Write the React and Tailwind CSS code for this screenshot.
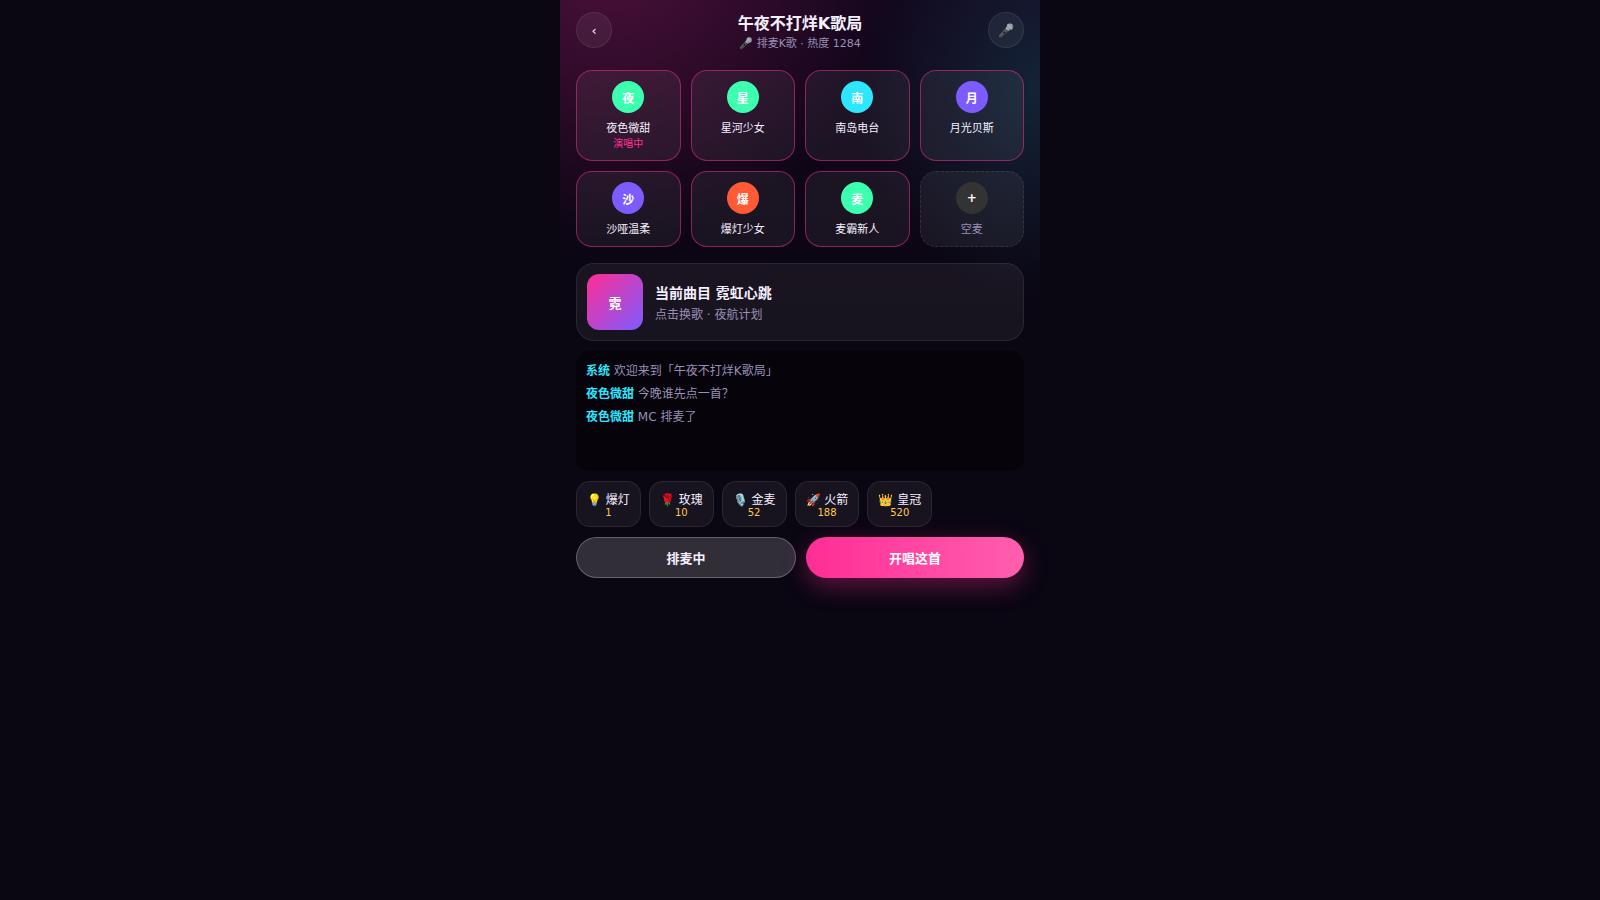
import React, { useState } from 'react'

const seats = [
  { name: '夜色微甜', short: '夜', color: 'bg-[#3dffb0]', singing: true },
  { name: '星河少女', short: '星', color: 'bg-[#3dffb0]' },
  { name: '南岛电台', short: '南', color: 'bg-[#2ee6ff]' },
  { name: '月光贝斯', short: '月', color: 'bg-[#7c5cff]' },
  { name: '沙哑温柔', short: '沙', color: 'bg-[#7c5cff]' },
  { name: '爆灯少女', short: '爆', color: 'bg-[#ff5a36]' },
  { name: '麦霸新人', short: '麦', color: 'bg-[#3dffb0]' },
  { name: '空麦', short: '+', color: 'bg-[#333333]', empty: true },
]

const messages = [
  { from: '系统', text: '欢迎来到「午夜不打烊K歌局」' },
  { from: '夜色微甜', text: '今晚谁先点一首？' },
  { from: '夜色微甜', text: 'MC 排麦了' },
]

const gifts = [
  { icon: '💡', name: '爆灯', price: 1 },
  { icon: '🌹', name: '玫瑰', price: 10 },
  { icon: '🎙️', name: '金麦', price: 52 },
  { icon: '🚀', name: '火箭', price: 188 },
  { icon: '👑', name: '皇冠', price: 520 },
]

function IconButton({ label, children }) {
  return (
    <button
      type="button"
      aria-label={label}
      className="flex size-9 items-center justify-center rounded-full border border-white/8 bg-white/6 text-[13px]"
    >
      {children}
    </button>
  )
}

function Seat({ seat }) {
  const frame = seat.empty
    ? 'border-dashed border-white/10 text-[#9a8fb5]'
    : 'border-[#ff2d95]/50'
  return (
    <button
      type="button"
      className={`flex flex-col items-center justify-start rounded-2xl border bg-white/6 p-2.5 ${frame}`}
    >
      <span
        className={`flex size-8 items-center justify-center rounded-full text-[12px] font-bold text-white ${seat.color}`}
      >
        {seat.short}
      </span>
      <span className="mt-1.5 text-[11px]">{seat.name}</span>
      {seat.singing && <span className="text-[10px] text-[#ff2d95]">演唱中</span>}
    </button>
  )
}

export default function App() {
  const [queued, setQueued] = useState(true)

  return (
    <div className="min-h-screen bg-[#0a0612] font-['DejaVu_Sans','Noto_Sans_CJK_SC',sans-serif] leading-[normal] text-[#f5f0ff]">
      <div className="mx-auto min-h-screen max-w-[480px] bg-[radial-gradient(ellipse_290px_290px_at_10%_-50px,rgba(255,45,149,0.25),transparent),radial-gradient(ellipse_180px_210px_at_100%_90px,rgba(46,230,255,0.13),transparent),linear-gradient(180deg,#12061c,#0a0612_320px)]">
        <header className="flex items-center justify-between px-4 py-2.5">
          <IconButton label="返回">‹</IconButton>
          <div className="text-center">
            <h1 className="text-[16px] font-bold">午夜不打烊K歌局</h1>
            <p className="text-[11px] text-[#9a8fb5]">🎤 排麦K歌 · 热度 1284</p>
          </div>
          <IconButton label="麦克风">🎤</IconButton>
        </header>

        <main className="px-4 pt-2.5 pb-6">
          <section className="grid grid-cols-4 gap-2.5">
            {seats.map((seat) => (
              <Seat key={seat.name} seat={seat} />
            ))}
          </section>

          <button
            type="button"
            className="mt-4 flex w-full items-center gap-3 rounded-[18px] border border-white/8 bg-white/6 p-2.5 text-left"
          >
            <span className="flex size-14 items-center justify-center rounded-xl bg-[linear-gradient(135deg,#ff2d95,#7c5cff)] text-[13px] font-bold text-white">
              霓
            </span>
            <span className="flex flex-col gap-[3px]">
              <span className="text-[14px] font-bold">当前曲目 霓虹心跳</span>
              <span className="text-[12px] text-[#9a8fb5]">点击换歌 · 夜航计划</span>
            </span>
          </button>

          <ul className="mt-2.5 h-[120px] space-y-1.5 overflow-auto rounded-[14px] bg-[#05020a]/80 p-2.5 text-[12px] text-[#9a8fb5]">
            {messages.map((m, i) => (
              <li key={i}>
                <b className="text-[#2ee6ff]">{m.from}</b> {m.text}
              </li>
            ))}
          </ul>

          <div className="mt-2.5 flex gap-2">
            {gifts.map((gift) => (
              <button
                key={gift.name}
                type="button"
                className="rounded-[14px] border border-white/8 bg-white/6 px-2.5 py-2 text-center text-[12px]"
              >
                {gift.icon} {gift.name}
                <span className="block text-[10px] text-[#ffc84a]">{gift.price}</span>
              </button>
            ))}
          </div>

          <div className="mt-2.5 flex gap-2.5">
            <button
              type="button"
              onClick={() => setQueued(!queued)}
              className="flex-1 rounded-full border border-white/25 bg-white/16 py-2.5 text-[13px] font-bold"
            >
              {queued ? '排麦中' : '上麦排队'}
            </button>
            <button
              type="button"
              className="flex-1 rounded-full bg-[linear-gradient(90deg,#ff2d95,#ff5fae)] py-2.5 text-[13px] font-bold text-white shadow-[0_8px_24px_rgba(255,45,149,0.35)]"
            >
              开唱这首
            </button>
          </div>
        </main>
      </div>
    </div>
  )
}
